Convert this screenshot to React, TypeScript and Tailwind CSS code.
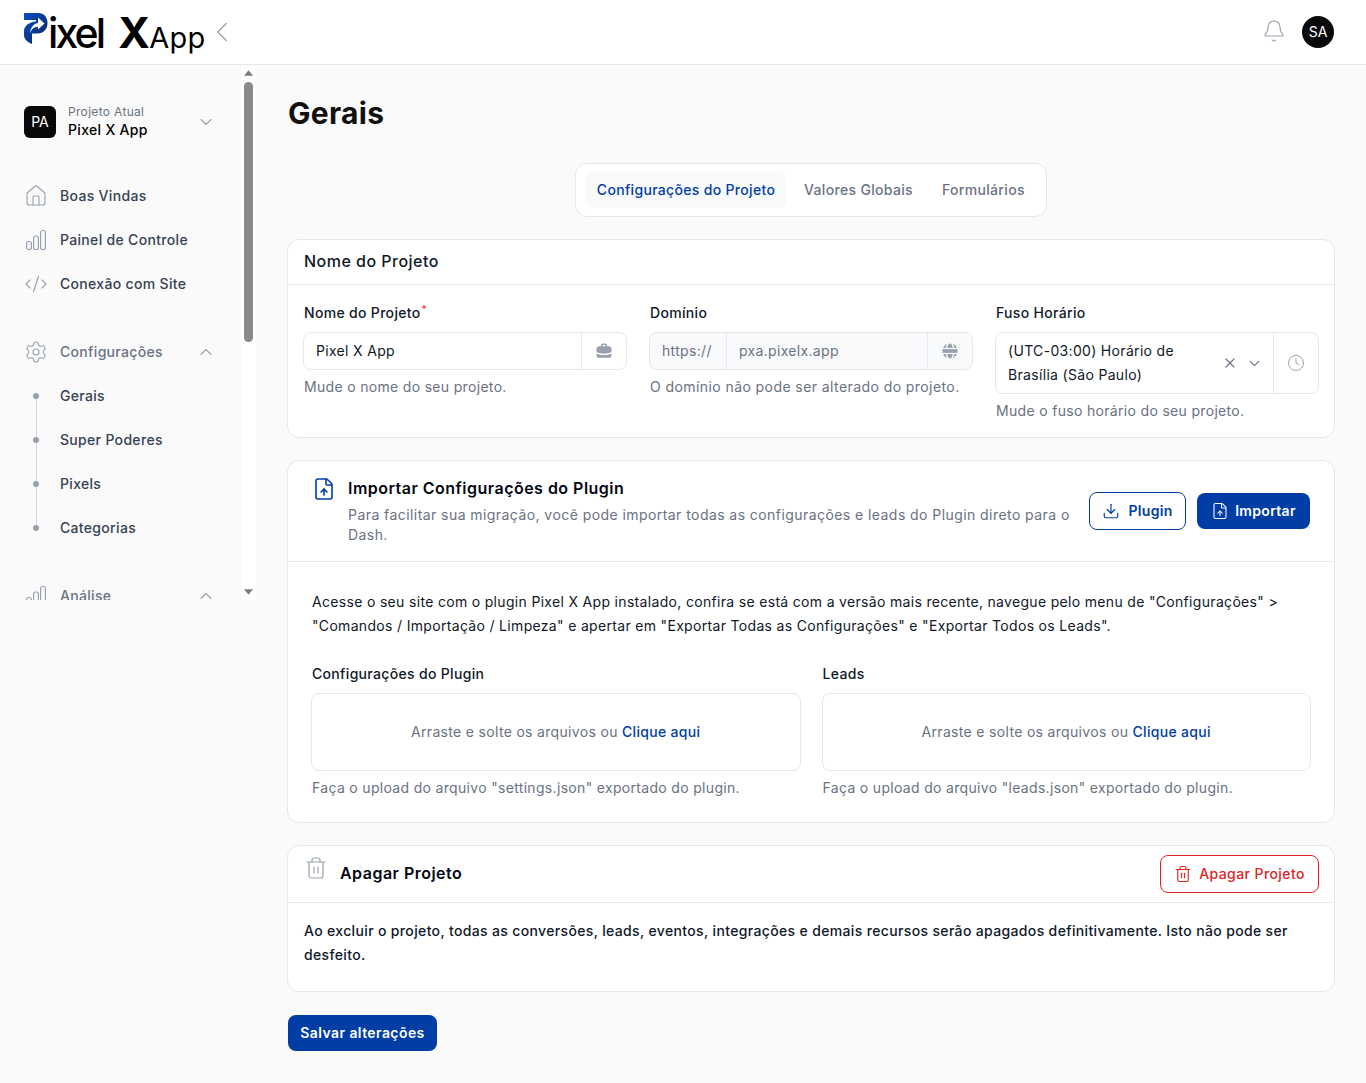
import React from "react";
import { Bell, ChevronDown, ChevronLeft, ChevronUp, Clock, CodeXml, Download, FileUp, Home, Settings, Trash2, X } from "lucide-react";

const Bars = ({ className = "" }: { className?: string }) => (
  <svg viewBox="0 0 24 24" fill="none" stroke="currentColor" strokeWidth="1.2" className={className}>
    <rect x="2.6" y="13.5" width="4.8" height="8" rx="2" />
    <rect x="9.6" y="8" width="4.8" height="13.5" rx="2" />
    <rect x="16.6" y="2.5" width="4.8" height="19" rx="2" />
  </svg>
);

const Logo = () => (
  <div className="flex items-baseline h-[64px] font-['Inter',sans-serif] text-black">
    <svg viewBox="0 0 24 32" className="w-[24px] h-[32px] self-start mt-[12px] shrink-0">
      <defs>
        <linearGradient id="pg" x1="0" y1="0" x2="1" y2="1">
          <stop offset="0" stopColor="#0a4fc0" />
          <stop offset="1" stopColor="#06245f" />
        </linearGradient>
      </defs>
      <path d="M0 1H14c6 0 9.500 4 9.500 10s-4 10.500-10 10.500H8V32C3 30 0 27 0 23z" fill="url(#pg)" />
      <path d="M0 8H12V9.500C5 10 0 14 0 19z" fill="#fff" />
      <path d="M6 21.500C6.500 15 10 11.500 14 11V5.500L20.500 11.500L14 17.500V14.800C10 15 7.500 17 6 21.500z" fill="#fff" />
    </svg>
    <span className="text-[41px] leading-[64px] font-medium tracking-[-0.07em]">ixel</span>
    <span className="text-[43px] leading-[64px] font-bold ml-[15px] tracking-[-0.09em]">X</span>
    <span className="text-[29px] leading-[64px] font-normal ml-[3px] tracking-[0.01em]">App</span>
    <ChevronLeft className="w-[34px] h-[34px] text-gray-400 ml-[-1px] self-start mt-[15px]" strokeWidth={0.9} />
  </div>
);

const NavItem = ({ icon, label, muted, chevron }: { icon: React.ReactNode; label: string; muted?: boolean; chevron?: boolean }) => (
  <div className="h-[44px] flex items-center">
    <div className="w-[24px] h-[24px] mr-[12px] text-gray-400 flex items-center justify-center">{icon}</div>
    <span className={`text-[14px] font-medium mb-[2px] ${muted ? "text-gray-500" : "text-gray-700"}`}>{label}</span>
    {chevron && <ChevronUp className="w-[20px] h-[20px] text-gray-400 ml-auto mr-[-1px]" strokeWidth={1.3} />}
  </div>
);

const SubItem = ({ label, last }: { label: string; last?: boolean }) => (
  <div className="h-[44px] flex items-center relative">
    <div className="w-[24px] flex justify-center mr-[12px]">
      <span className="w-[6px] h-[6px] rounded-full bg-gray-400 z-10" />
    </div>
    {!last && <span className="absolute left-[11.5px] top-[22px] h-[44px] w-px bg-gray-300" />}
    <span className="text-[14px] font-medium text-gray-700 mb-[2px]">{label}</span>
  </div>
);

const Sidebar = () => (
  <aside className="w-[256px] h-[535px] flex shrink-0">
    <div className="w-[241px] h-full overflow-hidden pt-[41px] pl-[24px] pr-[26px]">
      <div className="flex items-center h-[32px]">
        <div className="w-[32px] h-[32px] rounded-[6px] bg-[#09090b] text-white text-[14px] tracking-normal flex items-center justify-center mr-[12px] pb-px">PA</div>
        <div className="flex flex-col mb-[2px]">
          <span className="text-[12px] leading-[18px] text-gray-500">Projeto Atual</span>
          <span className="text-[14px] leading-[18px] font-medium text-black">Pixel X App</span>
        </div>
        <ChevronDown className="w-[20px] h-[20px] text-gray-400 ml-auto mr-[-1px]" strokeWidth={1.3} />
      </div>
      <div className="mt-[36px]">
        <NavItem icon={<Home className="w-[24px] h-[24px]" strokeWidth={1.1} />} label="Boas Vindas" />
        <NavItem icon={<Bars className="w-[24px] h-[24px]" />} label="Painel de Controle" />
        <NavItem icon={<CodeXml className="w-[24px] h-[24px]" strokeWidth={1.1} />} label="Conexão com Site" />
      </div>
      <div className="mt-[24px]">
        <NavItem icon={<Settings className="w-[24px] h-[24px]" strokeWidth={1.1} />} label="Configurações" muted chevron />
        <SubItem label="Gerais" />
        <SubItem label="Super Poderes" />
        <SubItem label="Pixels" />
        <SubItem label="Categorias" last />
      </div>
      <div className="mt-[24px]">
        <NavItem icon={<Bars className="w-[24px] h-[24px]" />} label="Análise" muted chevron />
      </div>
    </div>
    <div className="w-[15px] h-full bg-white flex flex-col items-center">
      <svg viewBox="0 0 10 6" className="w-[9px] h-[6px] mt-[5px] fill-[#7b7b7b]"><path d="M5 0l5 6H0z" /></svg>
      <div className="w-[9px] h-[260px] mt-[6px] rounded-full bg-[#8a8a8a]" />
      <div className="flex-1" />
      <svg viewBox="0 0 10 6" className="w-[9px] h-[6px] mb-[5px] fill-[#7b7b7b]"><path d="M5 6L0 0h10z" /></svg>
    </div>
  </aside>
);

const Hint = ({ children }: { children: React.ReactNode }) => (
  <p className="text-[14px] leading-[24px] text-gray-500 whitespace-nowrap">{children}</p>
);

const Label = ({ children }: { children: React.ReactNode }) => (
  <p className="text-[14px] leading-[24px] font-medium text-gray-900">{children}</p>
);

const Briefcase = () => (
  <svg viewBox="0 0 24 24" className="w-[18px] h-[18px] fill-gray-400">
    <path d="M8 5.500V4.500C8 3.100 9.100 2 10.500 2h3C14.900 2 16 3.100 16 4.500V5.500h2.500C20.400 5.500 22 7.100 22 9v4.200c-3 1.500-6.400 2.300-10 2.300S5 14.700 2 13.200V9C2 7.100 3.600 5.500 5.500 5.500H8zm2 0h4V4.500c0-.3-.2-.5-.5-.5h-3c-.3 0-.5.2-.5.500V5.500z" />
    <path d="M2 15.200c3 1.400 6.400 2.200 10 2.200s7-.8 10-2.200v2.800c0 1.700-1.300 3-3 3H5c-1.700 0-3-1.300-3-3z" />
  </svg>
);

const GlobeIcon = () => (
  <svg viewBox="0 0 24 24" className="w-[18px] h-[18px] fill-gray-400">
    <path d="M12 2c-1.800 0-3.200 2.500-3.700 6h7.400C15.200 4.500 13.800 2 12 2z" />
    <path d="M8 2.800C5.500 3.900 3.700 5.700 2.900 8h3.500c.2-2 .800-3.800 1.600-5.200zM16 2.800c.800 1.400 1.400 3.200 1.600 5.200h3.500c-.8-2.300-2.600-4.100-5.100-5.200z" />
    <path d="M2 9.500h20v5H2z" />
    <path d="M2.900 16h3.500c.2 2 .800 3.800 1.600 5.200C5.500 20.100 3.700 18.300 2.900 16zM8.300 16h7.400c-.5 3.500-1.900 6-3.700 6s-3.200-2.500-3.700-6zM17.600 16h3.500c-.8 2.300-2.600 4.100-5.100 5.200.8-1.400 1.400-3.200 1.600-5.200z" />
  </svg>
);

const Card = ({ children }: { children: React.ReactNode }) => (
  <section className="bg-white border border-gray-200 rounded-[12px]">{children}</section>
);

const Drop = () => (
  <div className="h-[78px] mt-[7px] mx-[-1px] pb-[2px] rounded-[8px] border border-gray-200 flex items-center justify-center text-[14px] text-gray-500">
    Arraste e solte os arquivos ou&nbsp;<span className="font-medium text-[#003ea5]">Clique aqui</span>
  </div>
);

export default function App() {
  return (
    <div className="min-h-[1083px] bg-[#fafafa] font-['Inter','Liberation_Sans',sans-serif] tracking-[0.02em]">
      <header className="h-[65px] bg-white border-b border-gray-200 flex justify-between pl-[24px] pr-[32px]">
        <Logo />
        <div className="flex items-center gap-[16px]">
          <Bell className="w-[24px] h-[24px] text-gray-400 mb-[2px]" strokeWidth={1.1} />
          <div className="w-[32px] h-[32px] rounded-full bg-[#09090b] text-white text-[14px] flex items-center justify-center tracking-normal pb-px">SA</div>
        </div>
      </header>
      <div className="flex">
        <Sidebar />
        <main className="flex-1 min-w-0 pl-[32px] pr-[32px] pb-[32px]">
          <h1 className="text-[30px] leading-[36px] font-bold text-[#111] mt-[30px] tracking-[0.01em]">Gerais</h1>
          <div className="flex justify-center mt-[32px]">
            <div className="h-[54px] w-[472px] bg-white border border-gray-200 rounded-[12px] flex items-center pl-[9px] text-[14px] font-medium text-gray-500 whitespace-nowrap">
              <div className="h-[36px] w-[202px] pb-[2px] justify-center rounded-[8px] bg-gray-50 text-[#003ea5] flex items-center">Configurações do Projeto</div>
              <div className="h-[36px] ml-[16px] pb-[2px] w-[111px] justify-center flex items-center">Valores Globais</div>
              <div className="h-[36px] ml-[28px] pb-[2px] flex items-center">Formulários</div>
            </div>
          </div>

          <div className="mt-[22px] -mx-px flex flex-col gap-[22px]">
            <Card>
              <div className="h-[45px] flex items-center px-[16px] pb-[2px] border-b border-gray-200 text-[16px] font-medium text-gray-900 tracking-[0.03em]">Nome do Projeto</div>
              <div className="grid grid-cols-[323px_323px_323px] gap-[23px] pl-[16px] pr-[15px] pt-[16px] pb-[14px]">
                <div>
                  <Label>Nome do Projeto<sup className="text-red-500 text-[10px] ml-px">*</sup></Label>
                  <div className="h-[38px] mt-[7px] mb-[5px] -ml-px rounded-[8px] border border-gray-200 flex items-center text-[14px] text-gray-900">
                    <span className="flex-1 pl-[12px] pb-[2px]">Pixel X App</span>
                    <span className="w-[45px] h-full border-l border-gray-200 flex items-center justify-center"><Briefcase /></span>
                  </div>
                  <Hint>Mude o nome do seu projeto.</Hint>
                </div>
                <div>
                  <Label>Domínio</Label>
                  <div className="h-[38px] mt-[7px] mb-[5px] -ml-px rounded-[8px] border border-gray-200 bg-gray-50 flex items-center text-[14px] text-gray-500">
                    <span className="w-[77px] h-full pl-[12px] pb-[2px] border-r border-gray-200 flex items-center">https://</span>
                    <span className="flex-1 pl-[12px] pb-[2px]">pxa.pixelx.app</span>
                    <span className="w-[45px] h-full border-l border-gray-200 flex items-center justify-center"><GlobeIcon /></span>
                  </div>
                  <Hint><span className="tracking-[0.03em]">O domínio não pode ser alterado do projeto.</span></Hint>
                </div>
                <div>
                  <Label>Fuso Horário</Label>
                  <div className="h-[62px] mt-[7px] mb-[5px] -ml-px rounded-[8px] border border-gray-200 flex items-center text-[14px] leading-[24px] text-gray-900">
                    <span className="w-[200px] pl-[12px] flex-none">(UTC-03:00) Horário de Brasília (São Paulo)</span>
                    <span className="flex-1 flex items-center justify-end gap-[8px] pr-[10px] text-gray-500">
                      <X className="w-[16px] h-[16px]" strokeWidth={1.7} />
                      <ChevronDown className="w-[17px] h-[17px]" strokeWidth={1.7} />
                    </span>
                    <span className="w-[45px] h-full border-l border-gray-200 flex items-center justify-center text-gray-400">
                      <Clock className="w-[18px] h-[18px]" strokeWidth={1.3} />
                    </span>
                  </div>
                  <Hint>Mude o fuso horário do seu projeto.</Hint>
                </div>
              </div>
            </Card>

            <Card>
              <div className="h-[101px] flex items-center border-b border-gray-200 pl-[24px] pr-[24px]">
                <FileUp className="w-[24px] h-[24px] text-[#003ea5] self-start mt-[16px] shrink-0" strokeWidth={1.6} />
                <div className="ml-[12px] w-[730px] self-start pt-[15px]">
                  <p className="text-[16px] leading-[24px] font-semibold text-gray-950 tracking-[0.03em]">Importar Configurações do Plugin</p>
                  <p className="text-[14px] leading-[20px] text-gray-500 mt-[5px] tracking-[0.031em]">Para facilitar sua migração, você pode importar todas as configurações e leads do Plugin direto para o Dash.</p>
                </div>
                <button className="ml-auto h-[38px] w-[97px] pb-px rounded-[8px] border border-[#003ea5] text-[#003ea5] text-[14px] font-semibold flex items-center justify-center gap-[8px]">
                  <Download className="w-[18px] h-[18px]" strokeWidth={1.6} />Plugin
                </button>
                <button className="ml-[11px] h-[36px] w-[113px] pb-px rounded-[8px] bg-[#003ea5] text-white text-[14px] font-semibold flex items-center justify-center gap-[6px]">
                  <FileUp className="w-[18px] h-[18px]" strokeWidth={1.4} />Importar
                </button>
              </div>
              <div className="px-[24px] pt-[28px] pb-[22px]">
                <p className="text-[14px] leading-[24px] text-gray-900">Acesse o seu site com o plugin Pixel X App instalado, confira se está com a versão mais recente, navegue pelo menu de "Configurações" &gt; "Comandos / Importação / Limpeza" e apertar em "Exportar Todas as Configurações" e "Exportar Todos os Leads".</p>
                <div className="grid grid-cols-2 gap-[23px] mt-[24px]">
                  <div>
                    <Label>Configurações do Plugin</Label>
                    <Drop />
                    <div className="mt-[5px]"><Hint>Faça o upload do arquivo "settings.json" exportado do plugin.</Hint></div>
                  </div>
                  <div>
                    <Label>Leads</Label>
                    <Drop />
                    <div className="mt-[5px]"><Hint>Faça o upload do arquivo "leads.json" exportado do plugin.</Hint></div>
                  </div>
                </div>
              </div>
            </Card>

            <Card>
              <div className="h-[57px] flex items-center border-b border-gray-200 pl-[16px] pr-[15px]">
                <Trash2 className="w-[24px] h-[24px] text-gray-400 mb-[12px] shrink-0" strokeWidth={1.2} />
                <span className="ml-[12px] mb-[2px] text-[16px] font-semibold text-gray-950 tracking-[0.03em]">Apagar Projeto</span>
                <button className="ml-auto h-[38px] w-[159px] pb-px rounded-[8px] border border-[#e02424] text-[#e02424] text-[14px] font-medium tracking-[0.03em] flex items-center justify-center gap-[7px]">
                  <Trash2 className="w-[18px] h-[18px]" strokeWidth={1.5} />Apagar Projeto
                </button>
              </div>
              <p className="px-[16px] pt-[16px] pb-[24px] text-[14px] leading-[24px] font-medium text-gray-900 tracking-[0.025em]">Ao excluir o projeto, todas as conversões, leads, eventos, integrações e demais recursos serão apagados definitivamente. Isto não pode ser desfeito.</p>
            </Card>
          </div>

          <button className="mt-[23px] h-[36px] w-[149px] pb-[2px] rounded-[8px] bg-[#003ea5] text-white text-[14px] font-semibold tracking-[0.03em]">Salvar alterações</button>
        </main>
      </div>
    </div>
  );
}
